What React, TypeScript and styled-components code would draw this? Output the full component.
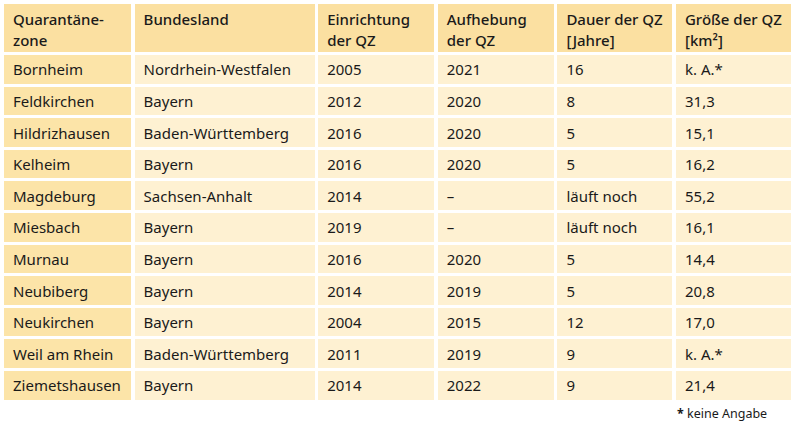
import React from "react";
import styled, { createGlobalStyle } from "styled-components";

const GlobalStyle = createGlobalStyle`
  html, body {
    margin: 0;
    padding: 0;
    background: #ffffff;
  }
  body {
    font-family: "Noto Sans", Lato, "DejaVu Sans", sans-serif;
    color: #1c1c1c;
  }
`;

type Row = [string, string, string, string, string, string];

const rows: Row[] = [
  ["Bornheim", "Nordrhein-Westfalen", "2005", "2021", "16", "k. A.*"],
  ["Feldkirchen", "Bayern", "2012", "2020", "8", "31,3"],
  ["Hildrizhausen", "Baden-Württemberg", "2016", "2020", "5", "15,1"],
  ["Kelheim", "Bayern", "2016", "2020", "5", "16,2"],
  ["Magdeburg", "Sachsen-Anhalt", "2014", "–", "läuft noch", "55,2"],
  ["Miesbach", "Bayern", "2019", "–", "läuft noch", "16,1"],
  ["Murnau", "Bayern", "2016", "2020", "5", "14,4"],
  ["Neubiberg", "Bayern", "2014", "2019", "5", "20,8"],
  ["Neukirchen", "Bayern", "2004", "2015", "12", "17,0"],
  ["Weil am Rhein", "Baden-Württemberg", "2011", "2019", "9", "k. A.*"],
  ["Ziemetshausen", "Bayern", "2014", "2022", "9", "21,4"],
];

const headers = [
  ["Quarantäne-", "zone"],
  ["Bundesland"],
  ["Einrichtung", "der QZ"],
  ["Aufhebung", "der QZ"],
  ["Dauer der QZ", "[Jahre]"],
  ["Größe der QZ", "[km²]"],
];

export default function App() {
  return (
    <>
      <GlobalStyle />
      <Page>
        <Table>
          {headers.map((lines, i) => (
            <HeadCell key={i}>
              {lines.map((l, j) => (
                <div key={j}>{l}</div>
              ))}
            </HeadCell>
          ))}
          {rows.map((row) =>
            row.map((value, i) => (
              <BodyCell key={row[0] + i} $first={i === 0}>
                {value}
              </BodyCell>
            ))
          )}
        </Table>
        <Footnote>
          <Star>*</Star> keine Angabe
        </Footnote>
      </Page>
    </>
  );
}

const Page = styled.div`
  width: 800px;
  height: 426px;
  padding: 4px 0 0 4px;
  box-sizing: border-box;
  display: flex;
  flex-direction: column;
`;

const Table = styled.div`
  display: grid;
  grid-template-columns: 127px 180px 116px 116px 115px 115px;
  grid-template-rows: 48px repeat(11, 28.5px);
  column-gap: 3.6px;
  row-gap: 3.1px;
`;

const HeadCell = styled.div`
  background: #fbe0a1;
  padding: 5px 9px 0;
  font-size: 15px;
  font-weight: 500;
  line-height: 21px;
  color: #1a1a1a;
  white-space: nowrap;
`;

const BodyCell = styled.div<{ $first?: boolean }>`
  background: ${(p) => (p.$first ? "#fce4a8" : "#fef1d2")};
  padding: 0 9px;
  display: flex;
  align-items: center;
  font-size: 15px;
  color: #1a1a1a;
  white-space: nowrap;
`;

const Footnote = styled.div`
  margin: 5px 0 0 673px;
  font-size: 12.5px;
  color: #1a1a1a;
`;

const Star = styled.span`
  font-weight: 700;
`;
